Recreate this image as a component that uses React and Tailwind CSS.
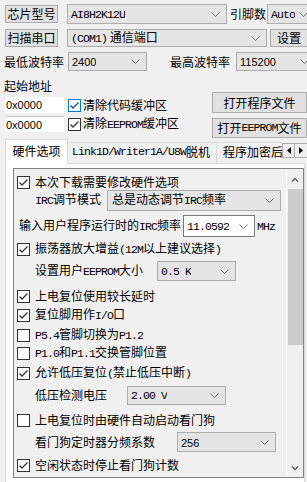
import React from "react";

// Latin parts drawn narrow like the SimSun half-width glyphs
const L = ({ children }) => (
  <span className="font-['Liberation_Mono','Noto_Sans_CJK_SC',monospace] text-[11.5px] tracking-[-0.9px]">
    {children}
  </span>
);

const N = ({ children }) => (
  <span className="font-['Liberation_Sans',sans-serif] text-[11px]">{children}</span>
);

const Chevron = () => (
  <svg width="9" height="5" viewBox="0 0 9 5" className="shrink-0">
    <path d="M0.5 0.5 L4.5 4.5 L8.5 0.5" fill="none" stroke="#6d6d6d" strokeWidth="1" />
  </svg>
);

function Btn({ className, children }) {
  return (
    <div
      className={`flex items-center justify-center shrink-0 whitespace-nowrap bg-[#e1e1e1] border border-[#adadad] ${className}`}
    >
      {children}
    </div>
  );
}

function Combo({ className, editable, children }) {
  return (
    <div
      className={`flex items-center justify-between shrink-0 whitespace-nowrap border pl-[3px] pr-[6px] ${
        editable ? "bg-white border-[#7a7a7a]" : "bg-[#e5e5e5] border-[#adadad]"
      } ${className}`}
    >
      <span className="overflow-hidden">{children}</span>
      <Chevron />
    </div>
  );
}

function Check({ checked, blue, className = "" }) {
  return (
    <div
      className={`w-[13px] h-[13px] shrink-0 bg-white border flex items-center justify-center ${
        blue ? "border-[#0078d7]" : "border-[#333333]"
      } ${className}`}
    >
      {checked && (
        <svg width="11" height="11" viewBox="0 0 11 11">
          <polyline
            points="1.5,5.5 4,8 9.5,2.5"
            fill="none"
            stroke={blue ? "#0a4f8f" : "#333333"}
            strokeWidth="1.3"
          />
        </svg>
      )}
    </div>
  );
}

function CheckRow({ checked, className, children }) {
  return (
    <div className={`flex items-center h-[16px] pl-[3px] whitespace-nowrap ${className}`}>
      <Check checked={checked} />
      <span className="ml-[5px]">{children}</span>
    </div>
  );
}

function App() {
  return (
    <div className="w-[307px] h-[482px] overflow-hidden bg-[#f0f0f0] text-[12px] leading-[16px] text-black font-['Noto_Sans_CJK_SC',sans-serif]">
      {/* chip model */}
      <div className="flex items-center h-[20px] mt-[4px] pl-[5px] whitespace-nowrap">
        <Btn className="w-[53px] h-[18px]">芯片型号</Btn>
        <Combo className="ml-[9px] w-[160px] h-[20px]">
          <L>AI8H2K12U</L>
        </Combo>
        <span className="ml-[3px] shrink-0">引脚数</span>
        <Combo className="ml-[1px] w-[48px] h-[20px]">
          <L>Auto</L>
        </Combo>
      </div>

      {/* port */}
      <div className="flex items-center h-[18px] mt-[5px] pl-[5px] whitespace-nowrap">
        <Btn className="w-[53px] h-[18px]">扫描串口</Btn>
        <Combo className="ml-[9px] w-[200px] h-[18px]">
          <L>(COM1)</L> 通信端口
        </Combo>
        <Btn className="ml-[3px] w-[38px] h-[18px]">设置</Btn>
      </div>

      {/* baud */}
      <div className="flex items-center h-[19px] mt-[5px] pl-[4px] whitespace-nowrap">
        <span className="w-[64px] shrink-0">最低波特率</span>
        <Combo className="w-[79px] h-[19px]">
          <N>2400</N>
        </Combo>
        <span className="ml-[23px] w-[66px] shrink-0">最高波特率</span>
        <Combo className="w-[80px] h-[19px]">
          <N>115200</N>
        </Combo>
      </div>

      <div className="h-[12px] leading-[12px] mt-[9px] pl-[4px]">起始地址</div>

      {/* address + buffers + file buttons */}
      <div className="flex pl-[5px] whitespace-nowrap">
        <div className="w-[207px] shrink-0 pt-[5px] flex flex-col gap-[3px]">
          <div className="flex items-center h-[16px]">
            <div className="w-[59px] h-[16px] bg-white flex items-center pl-[1px]">
              <N>0x0000</N>
            </div>
            <Check checked blue className="ml-[4px]" />
            <span className="ml-[2px]">清除代码缓冲区</span>
          </div>
          <div className="flex items-center h-[16px]">
            <div className="w-[59px] h-[16px] bg-white border-t border-[#c8c8c8] flex items-center pl-[1px]">
              <N>0x0000</N>
            </div>
            <Check checked className="ml-[4px]" />
            <span className="ml-[2px]">
              清除<L>EEPROM</L>缓冲区
            </span>
          </div>
        </div>
        <div className="flex flex-col gap-[5px] shrink-0">
          <Btn className="w-[95px] h-[21px]">打开程序文件</Btn>
          <Btn className="w-[95px] h-[20px]">
            打开<L>EEPROM</L>文件
          </Btn>
        </div>
      </div>

      {/* tabs */}
      <div className="flex items-end h-[24px] mt-[1px] pl-[5px] whitespace-nowrap">
        <div className="relative z-10 w-[63px] h-[25px] -mb-px shrink-0 bg-white border border-b-0 border-[#d9d9d9] flex items-center justify-center pb-[3px]">
          硬件选项
        </div>
        <div className="w-[149px] h-[21px] shrink-0 bg-[#f0f0f0] border-t border-r border-[#d9d9d9] flex items-center pl-[4px] pb-[2px]">
          <L>Link1D/Writer1A/U8W</L>脱机
        </div>
        <div className="w-[65px] h-[21px] shrink-0 overflow-hidden bg-[#f0f0f0] border-t border-[#d9d9d9] flex items-center pl-[6px] pb-[2px]">
          程序加密后
        </div>
        <div className="self-start mt-[4px] flex shrink-0">
          <div className="w-[13px] h-[15px] bg-[#f0f0f0] border border-[#adadad] flex items-center justify-center">
            <svg width="4" height="7" viewBox="0 0 4 7">
              <path d="M4 0 L0 3.5 L4 7 Z" fill="#000" />
            </svg>
          </div>
          <div className="w-[13px] h-[15px] bg-[#f0f0f0] border border-l-0 border-[#adadad] flex items-center justify-center">
            <svg width="4" height="7" viewBox="0 0 4 7">
              <path d="M0 0 L4 3.5 L0 7 Z" fill="#000" />
            </svg>
          </div>
        </div>
      </div>

      {/* tab page */}
      <div className="ml-[5px] w-[300px] h-[330px] bg-white border border-[#d9d9d9] pl-[7px] pt-[4px]">
        <div className="w-[291px] h-[310px] bg-[#f0f0f0] border border-[#828282] flex whitespace-nowrap">
          <div className="flex-1 flex flex-col">
            <CheckRow checked className="mt-[5px]">
              本次下载需要修改硬件选项
            </CheckRow>

            <div className="flex items-center h-[16px] mt-[2px] pl-[21px]">
              <span className="w-[72px] shrink-0">
                <L>IRC</L>调节模式
              </span>
              <Combo className="w-[174px] h-[21px] pl-[4px]">
                总是动态调节<L>IRC</L>频率
              </Combo>
            </div>

            <div className="flex items-center h-[16px] mt-[10px] pl-[5px]">
              <span className="w-[164px] shrink-0">
                输入用户程序运行时的<L>IRC</L>频率
              </span>
              <Combo editable className="w-[72px] h-[22px]">
                <L>11.0592</L>
              </Combo>
              <span className="ml-[2px]">
                <L>MHz</L>
              </span>
            </div>

            <CheckRow checked className="mt-[7px]">
              振荡器放大增益<L>(12M</L>以上建议选择<L>)</L>
            </CheckRow>

            <div className="flex items-center h-[16px] mt-[6px] pl-[21px]">
              <span className="w-[122px] shrink-0">
                设置用户<L>EEPROM</L>大小
              </span>
              <Combo className="w-[79px] h-[20px]">
                <L>0.5 K</L>
              </Combo>
            </div>

            <CheckRow checked className="mt-[9px]">
              上电复位使用较长延时
            </CheckRow>
            <CheckRow checked className="mt-[3px]">
              复位脚用作<L>I/O</L>口
            </CheckRow>
            <CheckRow className="mt-[4px]">
              <L>P5.4</L>管脚切换为<L>P1.2</L>
            </CheckRow>
            <CheckRow className="mt-[2px]">
              <L>P1.0</L>和<L>P1.1</L>交换管脚位置
            </CheckRow>
            <CheckRow checked className="mt-[4px]">
              允许低压复位<L>(</L>禁止低压中断<L>)</L>
            </CheckRow>

            <div className="flex items-center h-[16px] mt-[6px] pl-[21px]">
              <span className="w-[92px] shrink-0">低压检测电压</span>
              <Combo className="w-[99px] h-[19px]">
                <L>2.00 V</L>
              </Combo>
            </div>

            <CheckRow className="mt-[9px]">上电复位时由硬件自动启动看门狗</CheckRow>

            <div className="flex items-center h-[16px] mt-[6px] pl-[21px]">
              <span className="w-[142px] shrink-0">看门狗定时器分频系数</span>
              <Combo className="w-[99px] h-[20px]">
                <N>256</N>
              </Combo>
            </div>

            <CheckRow checked className="mt-[7px]">
              空闲状态时停止看门狗计数
            </CheckRow>
          </div>

          {/* scrollbar */}
          <div className="w-[17px] shrink-0 bg-[#f0f0f0] border-l border-white flex flex-col items-center">
            <div className="h-[20px] flex items-center justify-center">
              <svg width="8" height="5" viewBox="0 0 8 5">
                <path d="M1 4.5 L4 1.5 L7 4.5" fill="none" stroke="#606060" strokeWidth="1.5" />
              </svg>
            </div>
            <div className="w-[15px] h-[156px] bg-[#cdcdcd]" />
            <div className="flex-1" />
            <div className="h-[17px] flex items-center justify-center">
              <svg width="8" height="5" viewBox="0 0 8 5">
                <path d="M1 0.5 L4 3.5 L7 0.5" fill="none" stroke="#606060" strokeWidth="1.5" />
              </svg>
            </div>
          </div>
        </div>
      </div>
    </div>
  );
}

export default App;
